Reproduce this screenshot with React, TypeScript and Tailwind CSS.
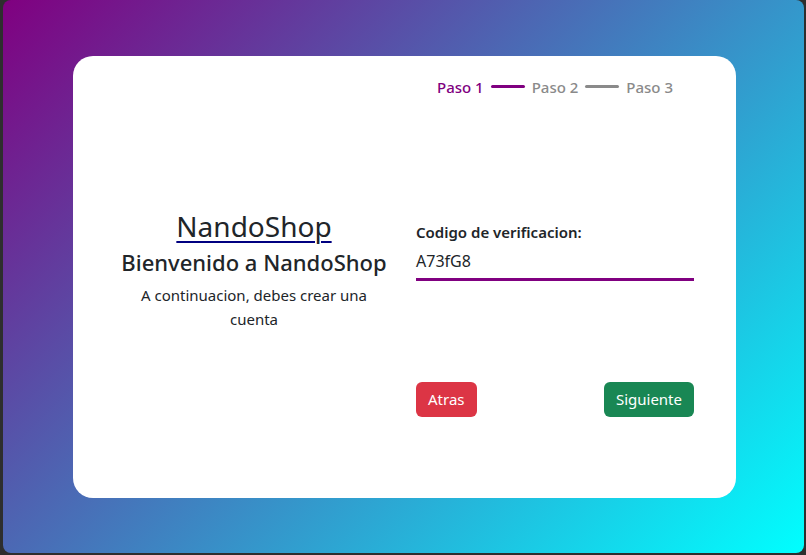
import React from "react";

export default function App() {
  return (
    <div className="w-[806px] h-[555px] bg-[#2e2e2e] overflow-hidden" style={{ fontFamily: '"Noto Sans", "Open Sans", sans-serif' }}>
      <div className="ml-[3px] w-[801px] h-[553px] rounded-[8px] bg-[linear-gradient(135deg,#800080,#00ffff)] flex items-center justify-center">
        <div className="w-[663px] h-[442px] bg-white rounded-[20px] px-[42px] pt-[19px] flex flex-col ml-[2px]">
          <div className="grid grid-cols-2 gap-[23px]">
            <div />
            <div className="flex items-center justify-center gap-[7px] text-[15px] leading-[24px] font-medium">
              <span className="text-[#800080]">Paso 1</span>
              <span className="w-[34px] h-[3px] bg-[#800080] rounded-full" />
              <span className="text-[#8a8a8a]">Paso 2</span>
              <span className="w-[34px] h-[3px] bg-[#8a8a8a] rounded-full" />
              <span className="text-[#8a8a8a]">Paso 3</span>
            </div>
          </div>
          <div className="grid grid-cols-2 gap-[23px] text-[#212529]">
            <div className="flex flex-col items-center text-center pt-[110px]">
              <a href="#" className="text-[28px] leading-[34px] underline decoration-[#000080] decoration-[2px] underline-offset-[4px] text-[#212529]">NandoShop</a>
              <h4 className="mt-[5px] text-[22px] leading-[28px] font-medium">Bienvenido a NandoShop</h4>
              <p className="mt-[7px] text-[15px] leading-[24px]">A continuacion, debes crear una<br />cuenta</p>
            </div>
            <div className="flex flex-col pt-[121px]">
              <label className="text-[15px] leading-[24px] font-semibold">Codigo de verificacion:</label>
              <div className="mt-[5px] text-[16px] leading-[24px] pb-[5px] border-b-[3px] border-[#800080]">A73fG8</div>
              <div className="mt-[101px] flex justify-between">
                <button className="h-[35px] px-[12px] rounded-[6px] bg-[#dc3545] text-white text-[15px]">Atras</button>
                <button className="h-[35px] px-[12px] rounded-[6px] bg-[#198754] text-white text-[15px]">Siguiente</button>
              </div>
            </div>
          </div>
        </div>
      </div>
    </div>
  );
}
